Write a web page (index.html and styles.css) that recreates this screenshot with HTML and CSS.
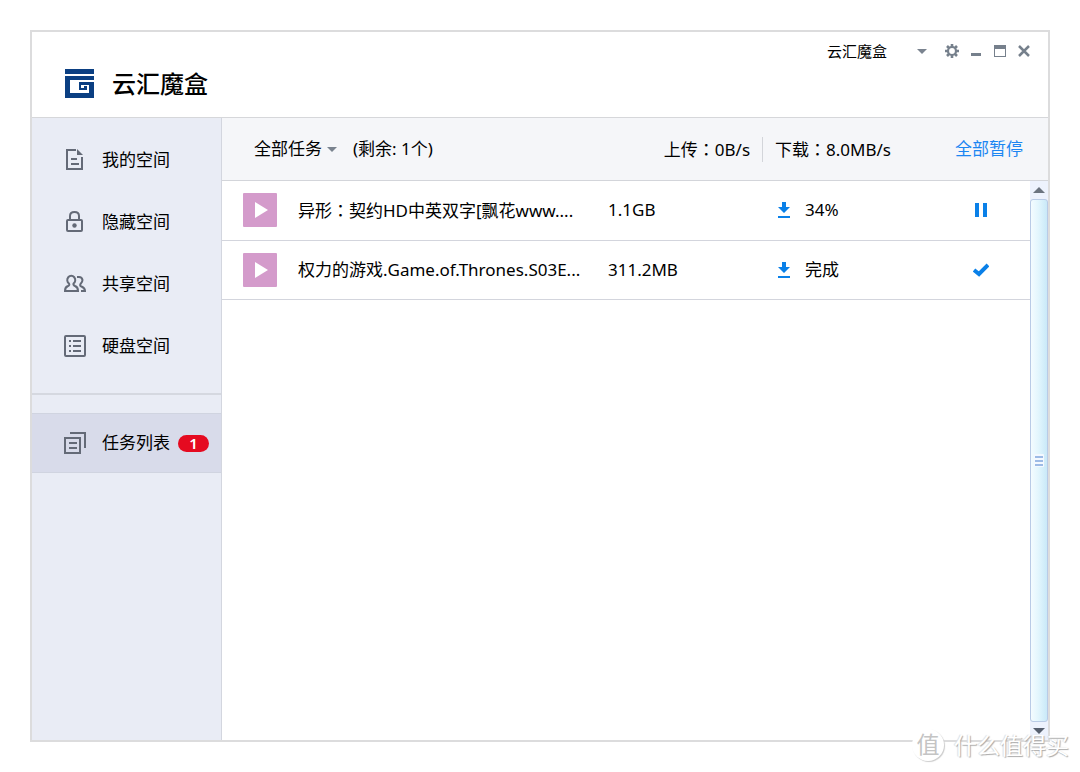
FILE: index.html
```html
<!DOCTYPE html>
<html lang="zh-CN">
<head>
<meta charset="utf-8">
<title>云汇魔盒</title>
<link rel="stylesheet" href="styles.css">
</head>
<body>
<div class="window">
  <header class="titlebar">
    <svg class="logo" viewBox="0 0 29 29" fill="#0b3f82" aria-hidden="true">
      <path d="M0 0h29v5H0z"/>
      <path d="M0 7h29v4H5v13h19v-8h-8v3h3v-2h3v4h-8v-8h15v16H0z"/>
    </svg>
    <h1 class="brand">云汇魔盒</h1>
    <div class="controls">
      <button class="account" type="button">云汇魔盒
        <svg width="10" height="5" viewBox="0 0 10 5" aria-hidden="true"><path fill="#7a838f" d="M0 0h10L5 5z"/></svg>
      </button>
      <button class="control" type="button" aria-label="设置">
        <svg width="16" height="16" viewBox="0 0 16 16" fill="none" stroke="#76808c" aria-hidden="true">
          <circle cx="8" cy="8" r="4" stroke-width="2.200"/>
          <path stroke-width="2.600" d="M8 1v3M8 12v3M1 8h3M12 8h3M3 3l2 2M11 11l2 2M13 3l-2 2M5 11l-2 2"/>
        </svg>
      </button>
      <button class="control" type="button" aria-label="最小化">
        <svg width="16" height="16" viewBox="0 0 16 16" aria-hidden="true"><path fill="#76808c" d="M3 10h10v3H3z"/></svg>
      </button>
      <button class="control" type="button" aria-label="最大化">
        <svg width="16" height="16" viewBox="0 0 16 16" aria-hidden="true"><path fill="#76808c" fill-rule="evenodd" d="M2 2h12v12H2zM3 6v7h10V6z"/></svg>
      </button>
      <button class="control" type="button" aria-label="关闭">
        <svg width="16" height="16" viewBox="0 0 16 16" fill="none" stroke="#76808c" stroke-width="2.500" aria-hidden="true"><path d="M3 3l10 10M13 3L3 13"/></svg>
      </button>
    </div>
  </header>

  <div class="content">
    <nav class="sidebar">
      <div class="spaces">
        <a class="item" href="#mine">
          <svg class="item-icon" viewBox="0 0 22 22" fill="none" stroke="#646a77" stroke-width="2" aria-hidden="true">
            <path d="M12 1H3v19h15V8M7 10h6M7 15h8"/><path fill="#646a77" stroke="none" d="M13 0l6 6h-6z"/>
          </svg>我的空间</a>
        <a class="item" href="#hidden">
          <svg class="item-icon" viewBox="0 0 22 22" fill="none" stroke="#646a77" stroke-width="2" aria-hidden="true">
            <rect x="3" y="9" width="15" height="11" rx="1"/><path d="M6 9V5q0-4 4.500-4T15 5v4"/><circle cx="10.500" cy="14.500" r="2.200" fill="#646a77" stroke="none"/>
          </svg>隐藏空间</a>
        <a class="item" href="#shared">
          <svg class="item-icon" viewBox="0 0 22 22" fill="none" stroke="#646a77" stroke-width="2" aria-hidden="true">
            <path d="M5 10.500A4 4.200 0 1 1 9.500 10.500Q9 12 11 13q3 1 3 5H1q0-4 3-5 2-1 1-2.500z"/>
            <path d="M13 4h2q3 0 3.500 3 0 2-2 4-1 2 1 2.500Q21 15 21 18h-4"/>
          </svg>共享空间</a>
        <a class="item" href="#disk">
          <svg class="item-icon" viewBox="0 0 22 22" fill="none" stroke="#646a77" stroke-width="2" aria-hidden="true">
            <rect x="1" y="1" width="20" height="20" rx="1"/><path d="M5 6h2M9 6h8M5 11h2M9 11h8M5 16h2M9 16h8"/>
          </svg>硬盘空间</a>
      </div>
      <a class="item active" href="#tasks" aria-current="page">
        <svg class="item-icon" viewBox="0 0 22 22" fill="none" stroke="#646a77" stroke-width="2" aria-hidden="true">
          <path d="M1 6h15v15H1zM5 11h8M5 16h8M6 1h15v15"/>
        </svg>任务列表<span class="badge">1</span></a>
    </nav>

    <main class="main">
      <div class="toolbar">
        <button class="filter" type="button">全部任务
          <svg width="10" height="5" viewBox="0 0 10 5" aria-hidden="true"><path fill="#7a838f" d="M0 0h10L5 5z"/></svg>
        </button>
        <span class="remaining">(剩余: 1个)</span>
        <span class="speed upload">上传<span class="colon" lang="zh-TW">：</span>0B/s</span>
        <span class="speed download">下载<span class="colon" lang="zh-TW">：</span>8.0MB/s</span>
        <button class="pause-all" type="button">全部暂停</button>
      </div>
      <div class="list">
        <table class="tasks">
          <colgroup><col class="c-icon"><col class="c-name"><col class="c-size"><col class="c-state"><col class="c-action"></colgroup>
          <tbody>
            <tr>
              <td class="thumb"><svg width="34" height="34" viewBox="0 0 34 34" aria-hidden="true"><rect width="34" height="34" rx="1" fill="#d49bcb"/><path fill="#fff" d="M12 9l13 8-13 8z"/></svg></td>
              <td>异形<span class="colon" lang="zh-TW">：</span>契约HD中英双字[飘花www....</td>
              <td>1.1GB</td>
              <td><span class="state"><svg width="14" height="18" viewBox="0 0 14 18" aria-hidden="true"><path fill="#0a80e8" d="M5 1h4v5h4l-6 6-6-6h4zM1 15h12v2H1z"/></svg>34%</span></td>
              <td><button class="action" type="button" aria-label="暂停"><svg width="16" height="16" viewBox="0 0 16 16" aria-hidden="true"><path fill="#0a80e8" d="M2 1h4v14H2zM10 1h4v14h-4z"/></svg></button></td>
            </tr>
            <tr>
              <td class="thumb"><svg width="34" height="34" viewBox="0 0 34 34" aria-hidden="true"><rect width="34" height="34" rx="1" fill="#d49bcb"/><path fill="#fff" d="M12 9l13 8-13 8z"/></svg></td>
              <td>权力的游戏.Game.of.Thrones.S03E...</td>
              <td>311.2MB</td>
              <td><span class="state"><svg width="14" height="18" viewBox="0 0 14 18" aria-hidden="true"><path fill="#0a80e8" d="M5 1h4v5h4l-6 6-6-6h4zM1 15h12v2H1z"/></svg>完成</span></td>
              <td><button class="action" type="button" aria-label="已完成"><svg width="16" height="16" viewBox="0 0 16 16" fill="none" stroke="#0a80e8" stroke-width="4" aria-hidden="true"><path d="M1 8l5 4 9-9"/></svg></button></td>
            </tr>
          </tbody>
        </table>
        <div class="scrollbar">
          <button class="arrow" type="button" aria-label="向上滚动"><svg width="12" height="6" viewBox="0 0 12 6" aria-hidden="true"><path fill="#6c7480" d="M6 0l6 6H0z"/></svg></button>
          <div class="thumb-bar"><svg width="10" height="13" viewBox="0 0 10 13" aria-hidden="true"><rect width="10" height="13" rx="1" fill="#f4f9ff"/><path fill="#9dbbe6" d="M1 2h8v2H1zM1 6h8v2H1zM1 10h8v2H1z"/></svg></div>
          <button class="arrow" type="button" aria-label="向下滚动"><svg width="12" height="6" viewBox="0 0 12 6" aria-hidden="true"><path fill="#565f6e" d="M0 0h12L6 6z"/></svg></button>
        </div>
      </div>
    </main>
  </div>
  <div class="watermark"><span class="seal"><span class="seal-text">值</span></span>什么值得买</div>
</div>
</body>
</html>
```
FILE: styles.css
```css
* { box-sizing: border-box; }
body {
  margin: 0;
  padding: 30px;
  background: #fff;
  color: #000;
  font: 17px/24px "Noto Sans", "Noto Sans CJK SC", sans-serif;
}
button {
  margin: 0;
  padding: 0;
  border: 0;
  background: none;
  color: inherit;
  font: inherit;
  cursor: pointer;
}
svg { display: block; flex: none; }
.colon { font-family: "Noto Sans CJK TC", sans-serif; }

.window {
  position: relative;
  display: flex;
  flex-direction: column;
  min-height: calc(100vh - 60px);
  border: 2px solid #dcdcdd;
}
.titlebar {
  display: flex;
  align-items: flex-start;
  height: 86px;
  padding: 0 16px 0 33px;
  border-bottom: 1px solid #d6d7da;
}
.logo { width: 29px; height: 29px; margin-top: 37px; }
.brand {
  margin: 36px 0 0 18px;
  font-size: 24px;
  line-height: 32px;
  font-weight: 500;
}
.controls {
  display: flex;
  align-items: center;
  gap: 8px;
  margin: 8px 0 0 auto;
}
.account {
  display: flex;
  align-items: center;
  gap: 30px;
  margin-right: 9px;
  font-size: 15px;
  line-height: 22px;
}

.content { display: flex; flex: 1; }
.sidebar {
  width: 190px;
  flex: none;
  background: #e9ecf5;
  border-right: 1px solid #d3d6df;
}
.spaces {
  margin-bottom: 18px;
  padding: 11px 0 16px;
  border-bottom: 2px solid #d5d8e0;
}
.item {
  display: flex;
  align-items: center;
  height: 62px;
  padding-left: 32px;
  color: inherit;
  text-decoration: none;
}
.item-icon { width: 22px; height: 22px; margin-right: 16px; }
.active {
  height: 60px;
  background: #d8dbea;
  border-top: 1px solid #d0d4e0;
  border-bottom: 1px solid #d0d4e0;
}
.badge {
  width: 31px;
  margin-left: 8px;
  border-radius: 9px;
  background: #e50a20;
  color: #fff;
  font-size: 15px;
  font-weight: 600;
  line-height: 17px;
  text-align: center;
}

.main { display: flex; flex: 1; flex-direction: column; min-width: 0; }
.toolbar {
  display: flex;
  align-items: center;
  height: 63px;
  padding: 0 25px 0 32px;
  background: #f5f6f9;
  border-bottom: 1px solid #d3d5da;
}
.filter { display: flex; align-items: center; gap: 5px; }
.remaining { margin-left: 16px; }
.upload {
  margin-left: auto;
  padding-right: 12px;
  border-right: 1px solid #d3d5da;
}
.download { padding-left: 12px; }
.pause-all { margin-left: 64px; color: #1c86f2; }

.list { display: flex; flex: 1; align-items: stretch; }
.tasks {
  flex: 1;
  align-self: flex-start;
  width: 100%;
  min-width: 0;
  border-collapse: collapse;
  table-layout: fixed;
}
.tasks tr { height: 59px; border-bottom: 1px solid #d3d5dd; }
.tasks td { padding: 0; white-space: nowrap; }
.tasks .thumb { padding-left: 21px; }
.c-icon { width: 76px; }
.c-name { width: 310px; }
.c-size { width: 169px; }
.c-action { width: 98px; }
.state { display: flex; align-items: center; gap: 14px; }
.action { display: block; margin: 0 auto; }

.scrollbar {
  display: flex;
  flex-direction: column;
  width: 18px;
  flex: none;
  background: #edf2fd;
}
.arrow {
  display: flex;
  align-items: center;
  justify-content: center;
  height: 18px;
}
.thumb-bar {
  display: flex;
  flex: 1;
  align-items: center;
  justify-content: center;
  border: 1px solid #b9cbe6;
  border-radius: 3px;
  background: linear-gradient(90deg, #f4fcff, #e3f6fd 45%, #c9e9f8);
}

.watermark {
  position: absolute;
  right: -21px;
  bottom: -21px;
  display: flex;
  align-items: center;
  gap: 10px;
  color: #fff;
  font-size: 23px;
  line-height: 32px;
  text-shadow: 1px 1px 1px #aaa, -1px 0 1px #ddd;
}
.seal {
  width: 32px;
  height: 32px;
  border-radius: 50%;
  background: #fff;
  box-shadow: 1px 1px 1px #ccc;
  line-height: 30px;
  text-align: center;
}
.seal-text {
  color: #c4c4c4;
  text-shadow: none;
}
```
